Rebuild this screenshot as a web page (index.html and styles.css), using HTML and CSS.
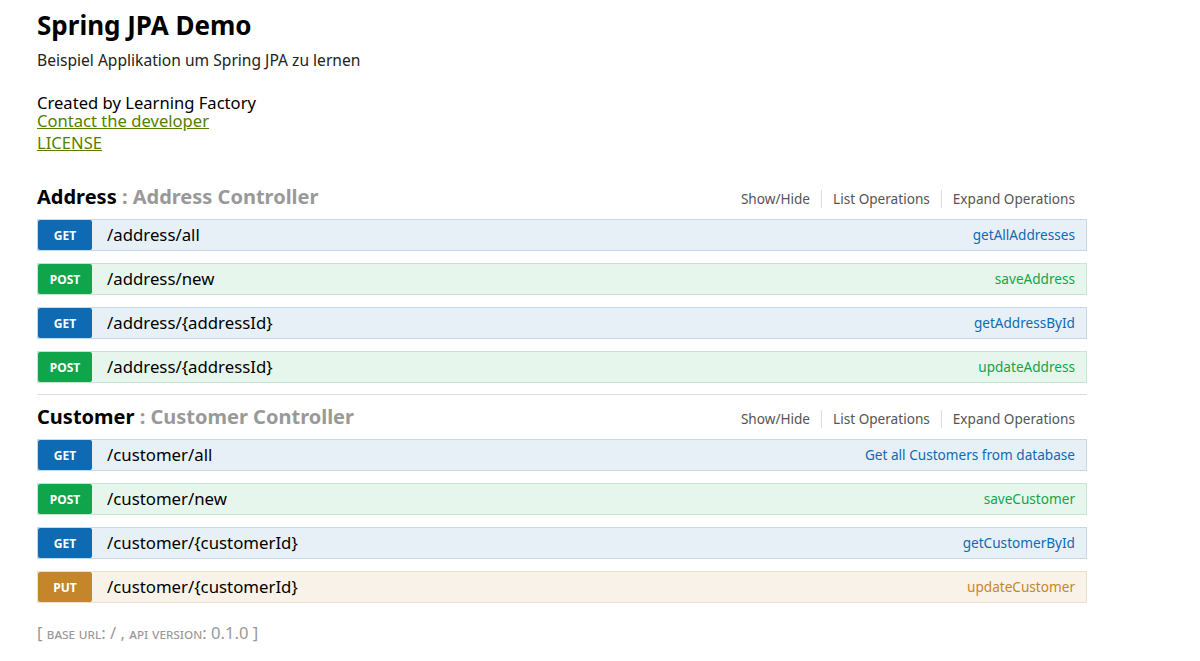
FILE: index.html
```html
<!DOCTYPE html>
<html>
<head>
<meta charset="utf-8">
<link rel="stylesheet" href="styles.css">
</head>
<body>
<div class="wrap">
  <div class="info">
    <h1 class="title">Spring JPA Demo</h1>
    <div class="desc">Beispiel Applikation um Spring JPA zu lernen</div>
    <div class="created">Created by Learning Factory</div>
    <div class="link-line"><a href="#">Contact the developer</a></div>
    <div class="link-line license"><a href="#">LICENSE</a></div>
  </div>

  <div class="resource">
    <div class="heading">
      <h2><span class="res-name">Address</span> : Address Controller</h2>
      <ul class="options">
        <li>Show/Hide</li>
        <li>List Operations</li>
        <li>Expand Operations</li>
      </ul>
    </div>
    <ul class="ops">
      <li class="op get"><span class="method">GET</span><span class="path">/address/all</span><span class="summary">getAllAddresses</span></li>
      <li class="op post"><span class="method">POST</span><span class="path">/address/new</span><span class="summary">saveAddress</span></li>
      <li class="op get"><span class="method">GET</span><span class="path">/address/{addressId}</span><span class="summary">getAddressById</span></li>
      <li class="op post"><span class="method">POST</span><span class="path">/address/{addressId}</span><span class="summary">updateAddress</span></li>
    </ul>
  </div>

  <div class="resource second">
    <div class="heading">
      <h2><span class="res-name">Customer</span> : Customer Controller</h2>
      <ul class="options">
        <li>Show/Hide</li>
        <li>List Operations</li>
        <li>Expand Operations</li>
      </ul>
    </div>
    <ul class="ops">
      <li class="op get"><span class="method">GET</span><span class="path">/customer/all</span><span class="summary">Get all Customers from database</span></li>
      <li class="op post"><span class="method">POST</span><span class="path">/customer/new</span><span class="summary">saveCustomer</span></li>
      <li class="op get"><span class="method">GET</span><span class="path">/customer/{customerId}</span><span class="summary">getCustomerById</span></li>
      <li class="op put"><span class="method">PUT</span><span class="path">/customer/{customerId}</span><span class="summary">updateCustomer</span></li>
    </ul>
  </div>

  <div class="footer">[ <span class="sc">base url</span>: / , <span class="sc">api version</span>: 0.1.0 ]</div>
</div>
</body>
</html>
```

FILE: styles.css
```css
html, body {
  margin: 0;
  padding: 0;
  background: #fff;
}
body {
  font-family: "Noto Sans", "Open Sans", sans-serif;
  color: #000;
}
.wrap {
  width: 1050px;
  padding: 0 0 0 37px;
}
.info {
  padding-top: 8px;
}
.title {
  margin: 0;
  font-size: 26px;
  line-height: 34px;
  font-weight: bold;
}
.desc {
  margin-top: 8px;
  font-size: 15.6px;
  line-height: 20px;
  color: #222;
}
.created {
  margin-top: 24px;
  font-size: 16.6px;
  line-height: 18px;
}
.link-line {
  font-size: 16.6px;
  line-height: 18px;
}
.link-line.license {
  margin-top: 4px;
}
.link-line a {
  color: #547f00;
  text-decoration: underline;
}
.resource {
  margin-top: 33px;
}
.resource.second {
  margin-top: 11px;
  border-top: 1px solid #ddd;
  padding-top: 10px;
}
.heading {
  display: flex;
  align-items: center;
  justify-content: space-between;
  height: 24px;
  margin-bottom: 10px;
}
.heading h2 {
  margin: 0;
  font-size: 20px;
  line-height: 24px;
  font-weight: bold;
  color: #999;
}
.res-name {
  color: #000;
}
.options {
  list-style: none;
  margin: 4px 12px 0 0;
  padding: 0;
  display: flex;
  align-items: center;
}
.options li {
  font-size: 13.6px;
  line-height: 18px;
  color: #555;
  padding: 0 11px;
  border-left: 1px solid #ddd;
}
.options li:first-child {
  border-left: none;
}
.options li:last-child {
  padding-right: 0;
}
.ops {
  list-style: none;
  margin: 0;
  padding: 0;
  display: flex;
  flex-direction: column;
  gap: 12px;
}
.op {
  display: flex;
  align-items: center;
  height: 30px;
  border: 1px solid;
  padding-right: 11px;
}
.method {
  width: 54px;
  height: 30px;
  border-radius: 2px;
  color: #fff;
  font-size: 12px;
  font-weight: bold;
  line-height: 32px;
  text-align: center;
  flex: none;
}
.path {
  margin-left: 15px;
  font-size: 16.8px;
  line-height: 20px;
  flex: 1;
}
.summary {
  font-size: 13.6px;
  line-height: 18px;
}
.get { background: #e7f0f7; border-color: #c3d9ec; }
.get .method { background: #0f6ab4; }
.get .summary { color: #0f6ab4; }
.post { background: #e7f6ec; border-color: #c3e8d1; }
.post .method { background: #10a54a; }
.post .summary { color: #10a54a; }
.put { background: #f9f2e9; border-color: #f0e0ca; }
.put .method { background: #c5862b; }
.put .summary { color: #c5862b; }
.footer {
  margin-top: 20px;
  font-size: 16.6px;
  line-height: 20px;
  color: #999;
}
.sc {
  font-variant: small-caps;
  font-size: 14.5px;
}
```
